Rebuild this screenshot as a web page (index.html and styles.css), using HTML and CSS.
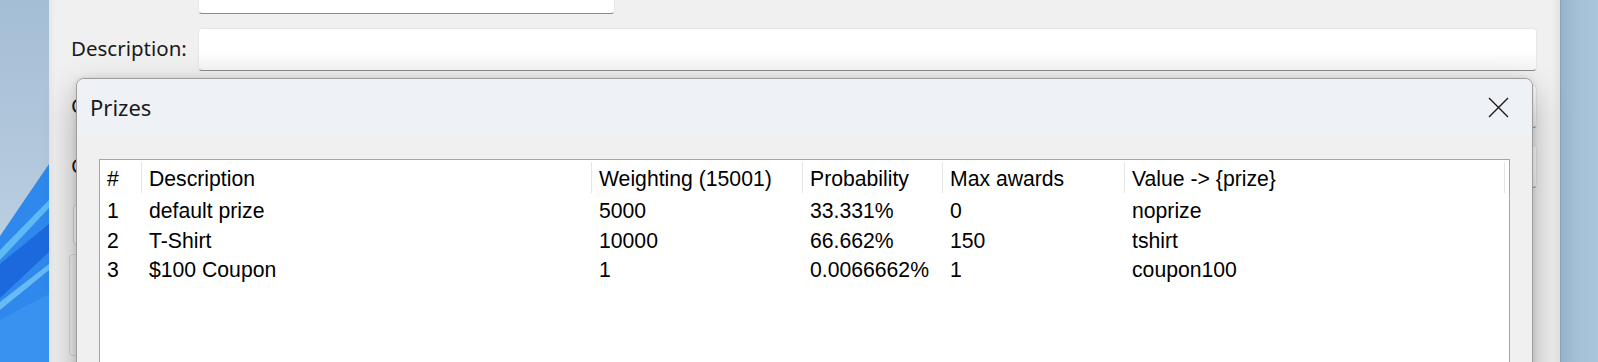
FILE: index.html
```html
<!DOCTYPE html>
<html lang="en">

<head>
  <meta charset="UTF-8">
  <meta name="viewport" content="width=device-width, initial-scale=1.0">
  <title>Prizes</title>
  <link rel="stylesheet" href="styles.css">
</head>

<body>
  <div class="screen">
    <!-- desktop, left -->
    <div class="desk desk-left">
      <svg width="49" height="362" viewBox="0 0 49 362">
        <defs>
          <linearGradient id="sky" x1="0" y1="0" x2="0" y2="1">
            <stop offset="0" stop-color="#a4bed5" />
            <stop offset="0.45" stop-color="#b3c8dc" />
            <stop offset="0.7" stop-color="#bdd0e2" />
          </linearGradient>
        </defs>
        <rect width="49" height="362" fill="url(#sky)" />
        <polygon points="0,236 49,164 49,362 0,362" fill="#2f88ec" />
        <polygon points="0,250 49,200 49,208 0,260" fill="#6cc6f6" opacity=".8" />
        <polygon points="0,264 49,224 49,252 0,298" fill="#1c69dd" />
        <polygon points="0,302 49,264 49,270 0,310" fill="#7fd0f7" opacity=".7" />
        <polygon points="0,320 49,294 49,362 0,362" fill="#3a92f0" />
      </svg>
    </div>

    <!-- main window -->
    <div class="app">
      <div class="form">
        <div class="row row-cut">
          <span class="lbl"></span>
          <div class="field field-short"></div>
        </div>
        <div class="row">
          <span class="lbl">Description:</span>
          <div class="field"></div>
        </div>
        <div class="row">
          <span class="lbl"><span class="cut">C</span></span>
          <div class="field"></div>
        </div>
        <div class="row row-gap">
          <span class="lbl"><span class="cut">C</span></span>
          <div class="field"></div>
        </div>
        <div class="btn"></div>
        <div class="group"></div>
      </div>

      <!-- dialog -->
      <div class="dialog">
        <div class="title">
          <span>Prizes</span>
          <svg class="close" width="21" height="21" viewBox="0 0 21 21">
            <path d="M1 1 L20 20 M20 1 L1 20" stroke="#1c1c1c" stroke-width="1.4" fill="none" />
          </svg>
        </div>
        <div class="body">
          <div class="list">
            <div class="grid head">
              <div>#</div>
              <div>Description</div>
              <div>Weighting (15001)</div>
              <div>Probability</div>
              <div>Max awards</div>
              <div>Value -&gt; {prize}</div>
            </div>
            <div class="grid item">
              <div>1</div>
              <div>default prize</div>
              <div>5000</div>
              <div>33.331%</div>
              <div>0</div>
              <div>noprize</div>
            </div>
            <div class="grid item">
              <div>2</div>
              <div>T-Shirt</div>
              <div>10000</div>
              <div>66.662%</div>
              <div>150</div>
              <div>tshirt</div>
            </div>
            <div class="grid item">
              <div>3</div>
              <div>$100 Coupon</div>
              <div>1</div>
              <div>0.0066662%</div>
              <div>1</div>
              <div>coupon100</div>
            </div>
          </div>
        </div>
      </div>
    </div>

    <!-- desktop, right -->
    <div class="desk desk-right"></div>
  </div>
</body>

</html>
```

FILE: styles.css
```css
* {
  margin: 0;
  padding: 0;
  box-sizing: border-box;
}

body {
  background-color: #a6c1d8;
}

.screen {
  display: flex;
  width: 1598px;
  height: 362px;
  overflow: hidden;
}

.desk-left {
  width: 49px;
  flex-shrink: 0;
}

.desk-left svg {
  display: block;
}

.desk-right {
  width: 38px;
  flex-shrink: 0;
  border-left: 1px solid #8aa3b9;
  background: linear-gradient(90deg, #98b4cc 0, #a3bfd6 40%, #abc6dc 100%);
}

/* main window */
.app {
  position: relative;
  width: 1511px;
  flex-shrink: 0;
  background: linear-gradient(90deg, #e6e6e6 0, #f0f0f0 6px, #f0f0f0 calc(100% - 8px), #e2e2e2 100%);
}

.form {
  padding: 0 23px 0 22px;
  font-family: "Noto Sans", "Open Sans", sans-serif;
  font-size: 20.5px;
  color: #1a1a1a;
}

.row {
  display: flex;
  align-items: center;
  height: 43px;
  margin-top: 14px;
}

.row-cut {
  height: 14px;
  margin-top: 0;
}

.row-gap {
  margin-top: 17px;
}

.lbl {
  width: 127px;
  flex-shrink: 0;
  padding-bottom: 4px;
}

/* label mostly hidden under the dialog */
.cut {
  display: inline-block;
  width: 5px;
  overflow: hidden;
  vertical-align: bottom;
}

.field {
  flex: 1;
  height: 43px;
  border: 1px solid #e6e6e6;
  border-bottom: 1px solid #8a8a8a;
  border-radius: 4px;
  background: linear-gradient(#ffffff 50%, #f5f5f5);
}

.field-short {
  flex: none;
  width: 417px;
  height: 14px;
  border-top: none;
  border-radius: 0 0 4px 4px;
  background: #fff;
}

.btn {
  margin: 16px 0 0 2px;
  width: 180px;
  height: 41px;
  border: 1px solid #d0d0d0;
  border-radius: 4px;
  background-color: #fdfdfd;
}

.group {
  margin: 9px 0 0 -2px;
  width: 600px;
  height: 102px;
  border: 1px solid #d5d5d5;
  border-radius: 4px;
}

/* dialog */
.dialog {
  position: absolute;
  top: 78px;
  left: 27px;
  width: 1457px;
  height: 320px;
  border: 1px solid #9d9d9d;
  border-radius: 8px 8px 0 0;
  background-color: #f0f0f0;
  box-shadow: 0 14px 34px rgba(0, 0, 0, .3), 0 0 6px rgba(0, 0, 0, .1);
  overflow: hidden;
}

.title {
  display: flex;
  align-items: center;
  justify-content: space-between;
  height: 57px;
  padding: 0 23px 1px 13px;
  background-color: #eef2f7;
  font-family: "Noto Sans", "Open Sans", sans-serif;
  font-size: 22px;
  color: #1a1a1a;
}

.close {
  display: block;
}

.body {
  padding: 23px 22px 0;
}

.list {
  height: 240px;
  border: 1px solid #a5a5a5;
  background-color: #fff;
  font-family: "Liberation Sans", Arial, sans-serif;
  font-size: 21.2px;
  color: #000;
}

.grid {
  display: grid;
  grid-template-columns: 42px 450px 211px 140px 182px 380px;
}

.grid div {
  padding: 1px 0 0 7px;
  white-space: nowrap;
}

.head {
  padding: 2px 0;
}

.head div {
  height: 31px;
  line-height: 31px;
  border-right: 1px solid #e5e5e5;
}

.item div {
  height: 29.5px;
  line-height: 29.5px;
}
```
